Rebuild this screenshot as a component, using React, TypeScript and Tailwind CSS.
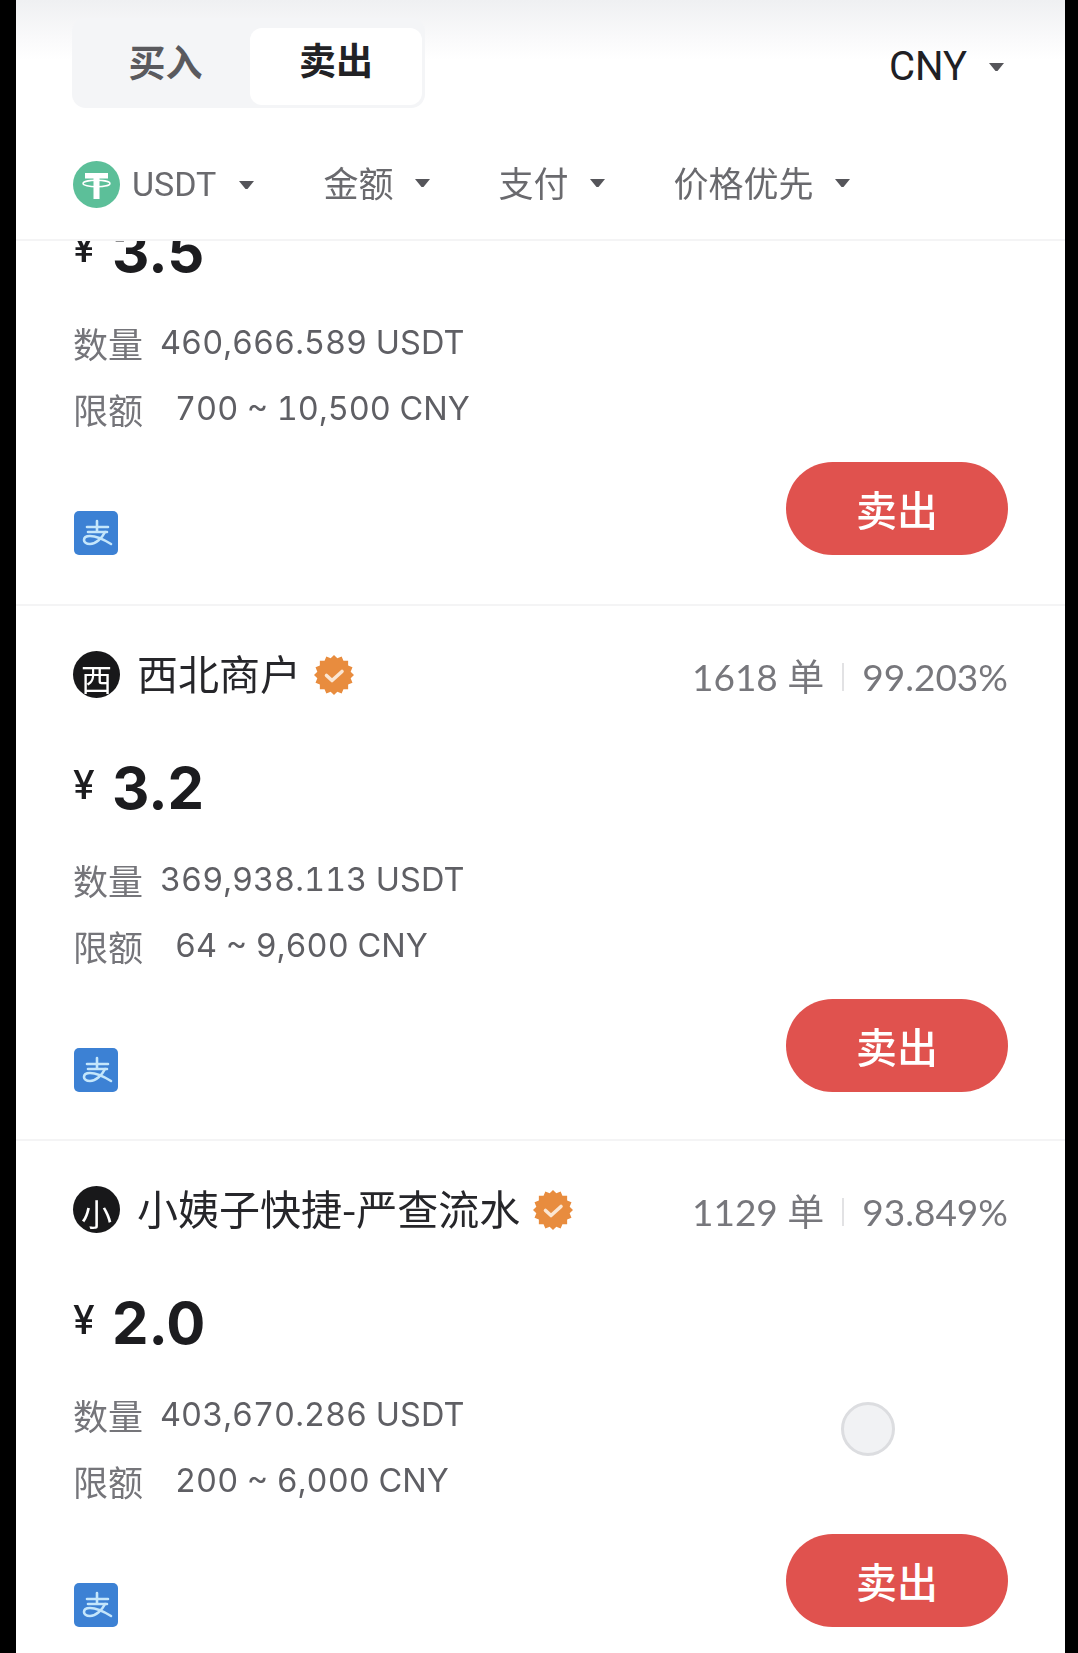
const listings = [
  { price: "3.5", qty: "460,666.589 USDT", limit: "700 ~ 10,500 CNY" },
  { name: "西北商户", initial: "西", orders: "1618 单", rate: "99.203%", price: "3.2", qty: "369,938.113 USDT", limit: "64 ~ 9,600 CNY" },
  { name: "小姨子快捷-严查流水", initial: "小", orders: "1129 单", rate: "93.849%", price: "2.0", qty: "403,670.286 USDT", limit: "200 ~ 6,000 CNY" },
];

const CJK = "font-['Noto_Sans_CJK_SC',sans-serif]";

function Caret({ className }: { className: string }) {
  return (
    <svg width="17" height="10" viewBox="0 0 17 10" className={className}>
      <path d="M1 1h15l-6.5 8h-2z" fill="currentColor" />
    </svg>
  );
}

function TetherIcon() {
  return (
    <svg width="47" height="47" viewBox="0 0 47 47" className="shrink-0">
      <circle cx="23.5" cy="23.5" r="23.5" fill="#5cbf99" />
      <path d="M12 12h23v5.5h-8.5V38h-6V17.5H12z" fill="#fff" />
      <ellipse cx="23.5" cy="22.5" rx="13.5" ry="3.2" fill="none" stroke="#fff" strokeWidth="1.4" />
    </svg>
  );
}

function AlipayIcon() {
  return (
    <svg width="44" height="44" viewBox="0 0 44 44" className="ml-[1px]">
      <rect width="44" height="44" rx="5" fill="#3c81d4" />
      <g fill="none" stroke="#c4e6fb" strokeWidth="2.6" strokeLinecap="round">
        <path d="M13 16h21M23 10v10M14 21h19" />
        <path d="M31 21c-3 6-9 12-15 12-4 0-6-2-6-4 0-3 3-4 6-4 6 0 13 3 21 8" />
      </g>
    </svg>
  );
}

function VerifiedBadge() {
  const points: string[] = [];
  for (let i = 0; i < 32; i++) {
    const r = i % 2 === 0 ? 20 : 17;
    const a = (i / 32) * Math.PI * 2;
    points.push(`${20 + r * Math.sin(a)},${20 - r * Math.cos(a)}`);
  }
  return (
    <svg width="40" height="40" viewBox="0 0 40 40" className="shrink-0">
      <polygon points={points.join(" ")} fill="#e88c3e" />
      <path d="M12.5 20.5l5.5 5 10-9" fill="none" stroke="#fbe6d2" strokeWidth="3.6" strokeLinecap="round" strokeLinejoin="round" />
    </svg>
  );
}

function Listing({ item }: { item: (typeof listings)[number] }) {
  return (
    <div className="h-[535px] shrink-0 border-t-2 border-[#f4f4f5] px-[57px] first:border-t-0">
      {/* Merchant row */}
      <div className="mt-[45px] flex h-[47px] items-center justify-between">
        {item.name && (
          <>
            <div className="flex items-center">
              <div className={`h-[47px] w-[47px] rounded-full bg-[#18181a] pt-[6px] text-center text-[31px] leading-[41px] text-white ${CJK}`}>
                {item.initial}
              </div>
              <span className={`-mt-[5px] ml-[17px] text-[41px] leading-[47px] text-[#26262a] ${CJK}`}>{item.name}</span>
              <span className="ml-[13px]">
                <VerifiedBadge />
              </span>
            </div>
            <div className="mt-[4px] flex items-center font-['Lato','Noto_Sans_CJK_SC',sans-serif] text-[37px] text-[#77777c]">
              <span>{item.orders}</span>
              <span className="mx-[18px] h-[28px] w-[2px] bg-[#e2e2e4]" />
              <span>{item.rate}</span>
            </div>
          </>
        )}
      </div>

      {/* Price */}
      <div className="mt-[60px] flex h-[60px] items-center font-['Inter',sans-serif] text-[#1c1c1f]">
        <span className="-mt-[6px] w-[39px] text-[39px] font-medium">¥</span>
        <span className="text-[58px] font-bold leading-[60px]">{item.price}</span>
      </div>

      {/* Details */}
      <div className="mt-[37px] flex h-[50px] items-center text-[#5f5f64]">
        <span className={`w-[87px] text-[35px] text-[#75757a] ${CJK}`}>数量</span>
        <span className="font-['Inter',sans-serif] text-[32.5px] tabular-nums">{item.qty}</span>
      </div>
      <div className="mt-[16px] flex h-[50px] items-center text-[#5f5f64]">
        <span className={`w-[102px] text-[35px] text-[#75757a] ${CJK}`}>限额</span>
        <span className="font-['Inter',sans-serif] text-[32.5px] tabular-nums">{item.limit}</span>
      </div>

      {/* Payment + action */}
      <div className="mt-[28px] flex h-[93px] items-end justify-between">
        <AlipayIcon />
        <button className={`flex h-[93px] w-[222px] items-center justify-center rounded-full bg-[#e0524e] text-[41px] font-medium text-white ${CJK}`}>
          卖出
        </button>
      </div>
    </div>
  );
}

export default function App() {
  return (
    <div className="flex h-[1653px] w-[1078px] justify-center overflow-hidden bg-black">
      <div className="relative ml-[3px] h-full w-[1049px] overflow-hidden bg-white">
        <div className="flex h-full flex-col blur-[0.6px]">
          {/* Top bar */}
          <div className="flex h-[133px] shrink-0 items-start justify-between bg-gradient-to-b from-[#eff0f2] via-[#fafafb] via-30% to-white to-45% pr-[60px] pl-[56px] pt-[18px]">
            <div className={`flex h-[90px] w-[353px] items-end rounded-[14px] bg-[#f4f5f7] px-[3px] pb-[3px] text-[37px] font-semibold ${CJK}`}>
              <div className="mb-[12px] flex-1 pl-[6px] text-center leading-[63px] text-[#5a5a5e]">买入</div>
              <div className="h-[77px] w-[172px] rounded-[12px] bg-white text-center leading-[63px] text-[#222225]">卖出</div>
            </div>
            <div className="mt-[19px] flex items-center font-['Roboto',sans-serif] text-[40px] text-[#202024]">
              CNY
              <Caret className="ml-[21px] text-[#55555a]" />
            </div>
          </div>

          {/* Filters */}
          <div className="z-10 flex h-[108px] shrink-0 items-start border-b-2 border-[#f4f4f5] bg-white pl-[57px] pt-[26px] text-[35px] text-[#6a6a6e]">
            <div className="flex items-center">
              <TetherIcon />
              <span className="ml-[12px] font-['Roboto',sans-serif] text-[34px]">USDT</span>
              <Caret className="ml-[22px] text-[#55555a]" />
            </div>
            {["金额", "支付", "价格优先"].map((label, i) => (
              <div key={label} className={`flex h-[47px] items-center ${CJK} ${i === 0 ? "ml-[68px]" : "ml-[67px]"}`}>
                <span>{label}</span>
                <Caret className="ml-[21px] text-[#55555a]" />
              </div>
            ))}
          </div>

          {/* Listings, first one scrolled under the filters */}
          <div className="-mt-[172px] flex flex-col">
            {listings.map((item) => (
              <Listing key={item.price} item={item} />
            ))}
          </div>

          {/* Floating touch ball */}
          <div className="absolute left-[825px] top-[1402px] h-[54px] w-[54px] rounded-full border-[3px] border-[#dcdde0] bg-[#f1f2f4]" />
        </div>
      </div>
    </div>
  );
}
